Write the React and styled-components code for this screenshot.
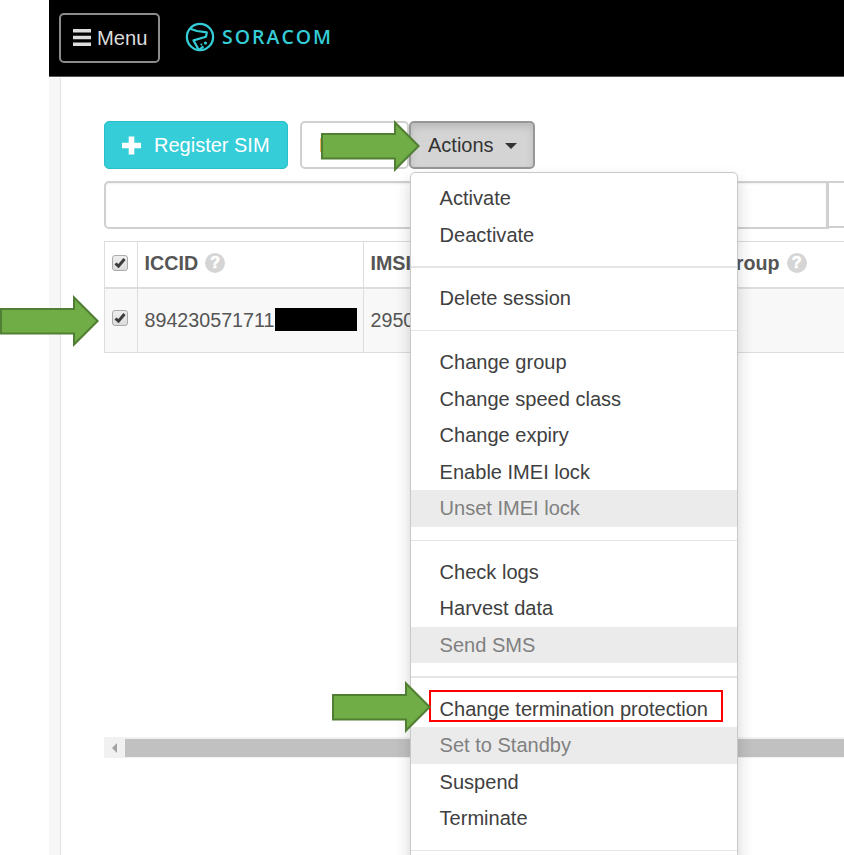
import React from "react";
import styled, { createGlobalStyle } from "styled-components";

const Global = createGlobalStyle`
  *, *::before, *::after { box-sizing: border-box; }
  body { margin: 0; background: #fff; overflow: hidden; }
`;

const Page = styled.div`
  position: relative;
  width: 844px;
  height: 855px;
  padding-left: 49px;
  overflow: hidden;
  display: flex;
  flex-direction: column;
  font-family: "Liberation Sans", Arial, sans-serif;
  font-size: 19.7px;
  color: #555;
`;

const Header = styled.header`
  flex: none;
  height: 77px;
  padding: 13px 0 0 10px;
  display: flex;
  align-items: flex-start;
  gap: 25px;
  background: #000;
  border-bottom: 1px solid #555;
`;

const MenuButton = styled.button`
  width: 101px;
  height: 50px;
  padding: 0 0 0 12px;
  display: flex;
  align-items: center;
  gap: 6px;
  border: 2px solid #8c8c8c;
  border-radius: 5px;
  background: #000;
  color: #ddd;
  font: 20.2px "Liberation Sans", Arial, sans-serif;
  svg { flex: none; margin-bottom: 2px; }
`;

const Brand = styled.div`
  display: flex;
  align-items: center;
  gap: 7px;
  height: 48px;
  color: #34cdd7;
`;

const BrandName = styled.span`
  font: 600 19.5px/30px "Open Sans", "Noto Sans", sans-serif;
  letter-spacing: 2px;
`;

const Body = styled.div`
  flex: 1;
  display: flex;
  min-height: 0;
`;

const Rail = styled.div`
  flex: none;
  width: 12px;
  margin-top: 1px;
  background: #f7f7f7;
  border-right: 1.5px solid #e2e2e2;
`;

const Main = styled.main`
  flex: 1;
  min-width: 0;
  padding: 44px 0 0 43px;
  overflow: hidden;
`;

const Toolbar = styled.div`
  display: flex;
  height: 48px;
`;

const Button = styled.button`
  width: ${(p) => p.$width}px;
  height: 48px;
  margin-right: ${(p) => p.$after || 0}px;
  padding: 0 0 0 17px;
  display: flex;
  align-items: center;
  border-radius: 5px;
  font: 20px "Liberation Sans", Arial, sans-serif;
  white-space: nowrap;
  ${(p) => p.$kind === "primary" && "background:#35cdd8;border:1.5px solid #2bbfca;color:#fff;gap:13px;"}
  ${(p) => p.$kind === "plain" && "background:#fff;border:2px solid #d0d0d0;color:#8a4a20;"}
  ${(p) => p.$kind === "open" && "background:#d4d4d4;border:2px solid #979797;color:#333;gap:11px;box-shadow:inset 0 4px 7px rgba(0,0,0,.125);"}
`;

const SearchRow = styled.div`
  display: flex;
  height: 48px;
  margin-top: 12px;
`;

const SearchBox = styled.input`
  width: 725px;
  height: 48px;
  border: solid #d0d0d0;
  border-width: 2px 3px 2px 2px;
  border-radius: 5px 0 0 5px;
  background: #fff;
  box-shadow: inset 0 1px 2px rgba(0,0,0,.07);
`;

const SearchAddon = styled.div`
  flex: 1;
  height: 47px;
  border: solid #d0d0d0;
  border-width: 2px 0;
`;

const Grid = styled.div`
  width: 740px;
  margin-top: 12px;
  border: solid #ddd;
  border-width: 1px 0 1px 1px;
`;

const Row = styled.div`
  display: grid;
  grid-template-columns: 33px 226px 350px 131px;
  height: ${(p) => (p.$head ? 47 : 63)}px;
  background: ${(p) => (p.$head ? "#fff" : "#f8f8f8")};
  border-bottom: ${(p) => (p.$head ? "2px solid #ddd" : "none")};
  font-weight: ${(p) => (p.$head ? 700 : 400)};
`;

const Cell = styled.div`
  display: flex;
  align-items: center;
  padding-left: 6.5px;
  padding-bottom: ${(p) => p.$lift || 0}px;
  border-right: ${(p) => (p.$open ? "none" : "1px solid #ddd")};
  min-width: 0;
  overflow: hidden;
  white-space: nowrap;
`;

const Tick = styled.span`
  width: 16px;
  height: 16px;
  display: flex;
  align-items: center;
  justify-content: center;
  border: 1px solid #aaa;
  border-radius: 3px;
  background: linear-gradient(#eee, #dcdcdc);
`;

const Help = styled.span`
  flex: none;
  width: 20px;
  height: 20px;
  margin-left: 7px;
  border-radius: 50%;
  background: #d5d5d5;
  color: #fff;
  text-align: center;
  font: 700 16px/20px "Liberation Sans", Arial, sans-serif;
  -webkit-text-stroke: 0.6px #fff;
`;

const Redaction = styled.span`
  width: 82px;
  height: 23px;
  margin: -2px 0 0 1px;
  background: #000;
`;

const ScrollBar = styled.div`
  display: flex;
  align-items: center;
  height: 21px;
  margin-top: 384px;
  background: #f1f1f1;
  svg { flex: none; margin: 0 6px 0 7px; }
`;

const Thumb = styled.div`
  flex: 1;
  height: 18px;
  background: #c1c1c1;
`;

const Dropdown = styled.div`
  position: absolute;
  left: 410px;
  top: 172px;
  width: 328px;
  height: 700px;
  padding-top: 7px;
  background: #fff;
  border: 1.5px solid #c8c8c8;
  border-radius: 5px;
  box-shadow: 0 8px 16px rgba(0, 0, 0, 0.175);
`;

const Item = styled.div`
  height: 36.5px;
  padding-left: 28.6px;
  line-height: 37px;
  white-space: nowrap;
  font-size: 20.04px;
  color: ${(p) => (p.$disabled ? "#808080" : "#404040")};
  background: ${(p) => (p.$disabled ? "#ebebeb" : "transparent")};
`;

const Divider = styled.div`
  height: 1.5px;
  margin: 13px 0 12.8px;
  background: #e5e5e5;
`;

const Highlight = styled.div`
  position: absolute;
  left: 429px;
  top: 690px;
  width: 294px;
  height: 32px;
  border: 2px solid #f00;
`;

const ArrowMark = styled.svg`
  position: absolute;
  left: ${(p) => p.$x}px;
  top: ${(p) => p.$y}px;
  display: block;
`;

const Arrow = ({ x, y }) => (
  <ArrowMark $x={x} $y={y} width="102" height="54" viewBox="0 0 102 54">
    <path d="M2 15H75V3.5L98.6 27L75 50.5V39.5H2Z" fill="#70ad47" stroke="#507e32" strokeWidth="2" />
  </ArrowMark>
);

const Checked = () => (
  <Tick>
    <svg width="12" height="12" viewBox="0 0 12 12">
      <path d="M1.5 6.5L4.5 9.2L10.5 2" fill="none" stroke="#3c3c3c" strokeWidth="3" />
    </svg>
  </Tick>
);

const groups = [
  [["Activate"], ["Deactivate"]],
  [["Delete session"]],
  [["Change group"], ["Change speed class"], ["Change expiry"], ["Enable IMEI lock"], ["Unset IMEI lock", true]],
  [["Check logs"], ["Harvest data"], ["Send SMS", true]],
  [["Change termination protection"], ["Set to Standby", true], ["Suspend"], ["Terminate"]],
];

export default function App() {
  return (
    <Page>
      <Global />
      <Header>
        <MenuButton>
          <svg width="18" height="17" viewBox="0 0 18 17" fill="#ddd">
            <path d="M0 0H18V3.4H0ZM0 6.8H18V10.2H0ZM0 13.6H18V17H0Z" />
          </svg>
          Menu
        </MenuButton>
        <Brand>
          <svg width="30" height="30" viewBox="0 0 30 30" fill="none" stroke="currentColor">
            <circle cx="15" cy="15" r="13.1" strokeWidth="2.3" />
            <path d="M4.5 6.5L12 9L21.8 10.3L21 14.7L8.5 18.4L13.8 28L18.5 24.3" strokeWidth="2.2" strokeLinejoin="round" />
            <circle cx="20.4" cy="21" r="1.6" fill="currentColor" stroke="none" />
            <circle cx="16.4" cy="22.6" r="1" fill="currentColor" stroke="none" />
          </svg>
          <BrandName>SORACOM</BrandName>
        </Brand>
      </Header>
      <Body>
        <Rail />
        <Main>
          <Toolbar>
            <Button $kind="primary" $width={184} $after={12}>
              <svg width="19" height="19" viewBox="0 0 19 19" fill="#fff">
                <path d="M6.7 0.5H12.3V6.7H19V12.3H12.3V18.5H6.7V12.3H0V6.7H6.7Z" />
              </svg>
              Register SIM
            </Button>
            <Button $kind="plain" $width={109}>D</Button>
            <Button $kind="open" $width={126}>
              Actions
              <svg width="12" height="7" viewBox="0 0 12 7" fill="#333">
                <path d="M0 1H12L6 7Z" />
              </svg>
            </Button>
          </Toolbar>
          <SearchRow>
            <SearchBox readOnly />
            <SearchAddon />
          </SearchRow>
          <Grid>
            <Row $head>
              <Cell $lift={3}><Checked /></Cell>
              <Cell $lift={3}>ICCID<Help>?</Help></Cell>
              <Cell $lift={3}>IMSI</Cell>
              <Cell $lift={3} $open>Group<Help>?</Help></Cell>
            </Row>
            <Row>
              <Cell $lift={5}><Checked /></Cell>
              <Cell>894230571711<Redaction /></Cell>
              <Cell $open>2950</Cell>
              <Cell $open />
            </Row>
          </Grid>
          <ScrollBar>
            <svg width="8" height="10" viewBox="0 0 8 10" fill="#a3a3a3">
              <path d="M6 0V10L1 5Z" />
            </svg>
            <Thumb />
          </ScrollBar>
        </Main>
      </Body>
      <Dropdown>
        {groups.map((items, i) => (
          <React.Fragment key={i}>
            {items.map(([label, disabled]) => (
              <Item key={label} $disabled={disabled}>{label}</Item>
            ))}
            <Divider />
          </React.Fragment>
        ))}
      </Dropdown>
      <Highlight />
      <Arrow x={-1.5} y={294} />
      <Arrow x={320} y={119} />
      <Arrow x={331} y={680} />
    </Page>
  );
}
